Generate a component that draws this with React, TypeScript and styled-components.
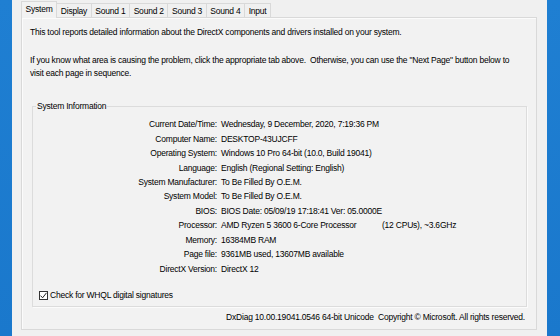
import React from "react";
import styled, { createGlobalStyle } from "styled-components";

const Global = createGlobalStyle`
  html, body { margin: 0; padding: 0; background: #f0f0f0; }
  body {
    font-family: "Liberation Sans", Arial, sans-serif;
    font-size: 8.5px;
    letter-spacing: -0.22px;
    color: #000;
  }
  * { box-sizing: border-box; }
`;

const Screen = styled.div`
  display: flex;
  width: 560px;
  height: 336px;
  overflow: hidden;
`;

const Desktop = styled.div<{ $w: number }>`
  width: ${(p) => p.$w}px;
  flex: none;
  background: linear-gradient(180deg, #1f7fd2 0%, #1a78cc 100%);
`;

const Dialog = styled.div`
  flex: 1;
  background: #f0f0f0;
  padding: 0 10px 0 9px;
  display: flex;
  flex-direction: column;
`;

const TabStrip = styled.div`
  display: flex;
  align-items: flex-end;
  height: 18px;
  margin-bottom: -1px;
  position: relative;
  z-index: 1;
`;

const Tab = styled.div<{ $active?: boolean }>`
  height: ${(p) => (p.$active ? 17 : 14)}px;
  margin-bottom: ${(p) => (p.$active ? 0 : 1)}px;
  margin-left: -1px;
  padding: 0 3.6px ${(p) => (p.$active ? 3 : 0)}px;
  display: flex;
  align-items: center;
  border: 1px solid #d9d9d9;
  border-bottom: none;
  background: ${(p) => (p.$active ? "#f2f2f2" : "#f0f0f0")};
  white-space: nowrap;
  &:first-child { margin-left: 0; }
`;

const Panel = styled.div`
  flex: none;
  height: 313px;
  border: 1px solid #d9d9d9;
  box-shadow: inset 1px 1px 0 #fbfbfb;
  background: #f2f2f2;
  padding: 8px 0 4px 8px;
  display: flex;
  flex-direction: column;
`;

const Para = styled.p<{ $gap?: number }>`
  margin: ${(p) => p.$gap ?? 0}px 0 0 0;
  line-height: 13px;
  white-space: pre;
`;

const Group = styled.fieldset`
  margin: 20px 9px 0 2px;
  padding: 5px 0 5px 0;
  border: 1px solid #dcdcdc;
  box-shadow: 1px 1px 0 #fbfbfb;
  min-width: 0;
`;

const Legend = styled.legend`
  margin-left: 3px;
  padding: 0 1px;
  line-height: 12px;
`;

const InfoGrid = styled.div`
  display: grid;
  grid-template-columns: 184px 1fr;
  column-gap: 4px;
  grid-auto-rows: 14.45px;
  align-items: center;
`;

const Label = styled.div`
  text-align: right;
  white-space: nowrap;
`;

const Value = styled.div`
  white-space: nowrap;
`;

const Column = styled.span`
  display: inline-block;
  width: 161px;
`;

const CheckRow = styled.label`
  display: flex;
  align-items: center;
  gap: 2px;
  height: 13px;
  margin: 12.5px 0 0 6px;
`;

const Box = styled.span`
  width: 9px;
  height: 9px;
  border: 1px solid #333;
  background: #fff;
  display: flex;
  align-items: center;
  justify-content: center;
  margin-top: 1px;
`;

const Footer = styled.div`
  margin-top: 4px;
  padding-right: 11px;
  line-height: 13px;
  text-align: right;
  white-space: pre;
`;

const tabs = ["System", "Display", "Sound 1", "Sound 2", "Sound 3", "Sound 4", "Input"];

const rows: [string, React.ReactNode][] = [
  ["Current Date/Time:", "Wednesday, 9 December, 2020, 7:19:36 PM"],
  ["Computer Name:", "DESKTOP-43UJCFF"],
  ["Operating System:", "Windows 10 Pro 64-bit (10.0, Build 19041)"],
  ["Language:", "English (Regional Setting: English)"],
  ["System Manufacturer:", "To Be Filled By O.E.M."],
  ["System Model:", "To Be Filled By O.E.M."],
  ["BIOS:", "BIOS Date: 05/09/19 17:18:41 Ver: 05.0000E"],
  [
    "Processor:",
    <>
      <Column>AMD Ryzen 5 3600 6-Core Processor</Column>(12 CPUs), ~3.6GHz
    </>,
  ],
  ["Memory:", "16384MB RAM"],
  ["Page file:", "9361MB used, 13607MB available"],
  ["DirectX Version:", "DirectX 12"],
];

export default function App() {
  return (
    <>
      <Global />
      <Screen>
        <Desktop $w={12} />
        <Dialog>
          <TabStrip>
            {tabs.map((t, i) => (
              <Tab key={t} $active={i === 0}>
                {t}
              </Tab>
            ))}
          </TabStrip>
          <Panel>
            <Para>This tool reports detailed information about the DirectX components and drivers installed on your system.</Para>
            <Para $gap={15}>
              {"If you know what area is causing the problem, click the appropriate tab above.  Otherwise, you can use the \"Next Page\" button below to\nvisit each page in sequence."}
            </Para>
            <Group>
              <Legend>System Information</Legend>
              <InfoGrid>
                {rows.map(([l, v]) => (
                  <React.Fragment key={l}>
                    <Label>{l}</Label>
                    <Value>{v}</Value>
                  </React.Fragment>
                ))}
              </InfoGrid>
              <CheckRow>
                <Box>
                  <svg width="7" height="7" viewBox="0 0 7 7">
                    <polyline points="0.5,3.6 2.6,5.8 6.5,0.8" fill="none" stroke="#222" strokeWidth="1" />
                  </svg>
                </Box>
                Check for WHQL digital signatures
              </CheckRow>
            </Group>
            <Footer>{"DxDiag 10.00.19041.0546 64-bit Unicode  Copyright \u00a9 Microsoft. All rights reserved."}</Footer>
          </Panel>
        </Dialog>
        <Desktop $w={13} />
      </Screen>
    </>
  );
}
